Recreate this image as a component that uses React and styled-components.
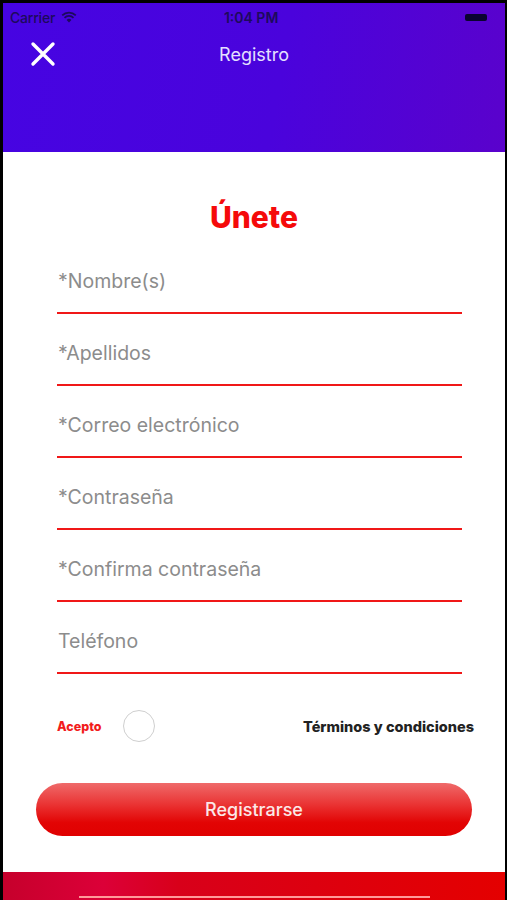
import React from 'react'
import styled, { createGlobalStyle } from 'styled-components'

const Global = createGlobalStyle`
  html, body {
    margin: 0;
    padding: 0;
    background: #000;
  }
  body {
    font-family: Inter, 'Liberation Sans', Arial, sans-serif;
  }
`

const Frame = styled.div`
  width: 507px;
  height: 900px;
  box-sizing: border-box;
  padding: 3px 2px 0 3px;
  background: #000;
  overflow: hidden;
`

const Screen = styled.div`
  height: 897px;
  display: flex;
  flex-direction: column;
  background: #fff;
`

const Header = styled.header`
  height: 149px;
  flex-shrink: 0;
  background: linear-gradient(100deg, #4604e2 0%, #4a03dc 55%, #5a02cc 100%);
  display: flex;
  flex-direction: column;
`

const StatusBar = styled.div`
  height: 28px;
  display: flex;
  align-items: center;
  padding: 0 10px 0 7px;
  color: #1d0a5c;
  font-size: 14px;
  font-weight: 600;
`

const Carrier = styled.span`
  display: flex;
  align-items: center;
  gap: 6px;
  font-weight: 500;
  letter-spacing: -0.2px;
`

const Clock = styled.span`
  flex: 1;
  text-align: center;
  margin-right: 40px;
`

const Battery = styled.span`
  width: 22px;
  height: 7px;
  background: #0a0330;
  border-radius: 2px;
  margin-right: 8px;
`

const Nav = styled.div`
  height: 46px;
  display: flex;
  align-items: center;
  padding: 0 0 0 25px;
`

const CloseButton = styled.button`
  width: 30px;
  height: 30px;
  padding: 0;
  border: none;
  background: none;
  display: flex;
  align-items: center;
  justify-content: center;
`

const NavTitle = styled.h1`
  flex: 1;
  margin: 0 55px 0 0;
  text-align: center;
  color: #e4e0ff;
  font-size: 18px;
  font-weight: 400;
`

const Main = styled.main`
  flex: 1;
  display: flex;
  flex-direction: column;
  padding-top: 48px;
`

const Title = styled.h2`
  margin: 0 0 8px;
  text-align: center;
  color: #f50a0a;
  font-size: 30px;
  line-height: 34px;
  font-weight: 800;
`

const Form = styled.div`
  padding: 0 43px 0 54px;
  display: flex;
  flex-direction: column;
`

const Field = styled.label`
  display: block;
  height: 72px;
  box-sizing: border-box;
  padding-top: 27px;
  padding-left: 1px;
  border-bottom: 2px solid #f01818;
  color: #8c8c8c;
  font-size: 19.5px;
  line-height: 24px;
`

const TermsRow = styled.div`
  margin-top: 32px;
  height: 40px;
  display: flex;
  align-items: center;
  padding: 0 31px 0 54px;
`

const Accept = styled.span`
  color: #f21c1c;
  font-size: 12.5px;
  font-weight: 800;
`

const Radio = styled.span`
  width: 32px;
  height: 32px;
  box-sizing: border-box;
  border-radius: 50%;
  border: 1.5px solid #cfcfcf;
  margin-left: 21px;
`

const Terms = styled.span`
  margin-left: auto;
  color: #222;
  font-size: 14.5px;
  font-weight: 800;
`

const SubmitButton = styled.button`
  margin: 37px 33px 0;
  height: 53px;
  border: none;
  border-radius: 27px;
  background: linear-gradient(180deg, #ef6a6a 0%, #ea3434 40%, #e20404 75%, #e00000 100%);
  color: #fbe8e8;
  font-family: inherit;
  font-size: 18px;
  font-weight: 500;
`

const Footer = styled.footer`
  margin-top: auto;
  height: 28px;
  background: linear-gradient(90deg, #c6002c 0%, #dc0038 20%, #d8001a 35%, #e40000 100%);
  display: flex;
  align-items: flex-end;
  justify-content: center;
  padding-bottom: 2px;
  box-sizing: border-box;
`

const HomeBar = styled.span`
  width: 351px;
  height: 2px;
  background: #ff9a9a;
`

const fields = [
  '*Nombre(s)',
  '*Apellidos',
  '*Correo electrónico',
  '*Contraseña',
  '*Confirma contraseña',
  'Teléfono',
]

const Wifi = () => (
  <svg width="16" height="12" viewBox="0 0 16 12">
    <path d="M8 11.5 L5.6 8.9 A3.4 3.4 0 0 1 10.4 8.9 Z" fill="#1d0a5c" />
    <path d="M3.5 6.8 A6.4 6.4 0 0 1 12.5 6.8" stroke="#1d0a5c" strokeWidth="1.8" fill="none" />
    <path d="M1.2 4.4 A9.6 9.6 0 0 1 14.8 4.4" stroke="#1d0a5c" strokeWidth="1.8" fill="none" />
  </svg>
)

const CloseIcon = () => (
  <svg width="26" height="26" viewBox="0 0 26 26">
    <path d="M3 3 L23 23 M23 3 L3 23" stroke="#fff" strokeWidth="3.4" strokeLinecap="round" />
  </svg>
)

export default function App() {
  return (
    <>
      <Global />
      <Frame>
        <Screen>
          <Header>
            <StatusBar>
              <Carrier>Carrier <Wifi /></Carrier>
              <Clock>1:04 PM</Clock>
              <Battery />
            </StatusBar>
            <Nav>
              <CloseButton><CloseIcon /></CloseButton>
              <NavTitle>Registro</NavTitle>
            </Nav>
          </Header>
          <Main>
            <Title>Únete</Title>
            <Form>
              {fields.map(f => <Field key={f}>{f}</Field>)}
            </Form>
            <TermsRow>
              <Accept>Acepto</Accept>
              <Radio />
              <Terms>Términos y condiciones</Terms>
            </TermsRow>
            <SubmitButton>Registrarse</SubmitButton>
            <Footer>
              <HomeBar />
            </Footer>
          </Main>
        </Screen>
      </Frame>
    </>
  )
}
